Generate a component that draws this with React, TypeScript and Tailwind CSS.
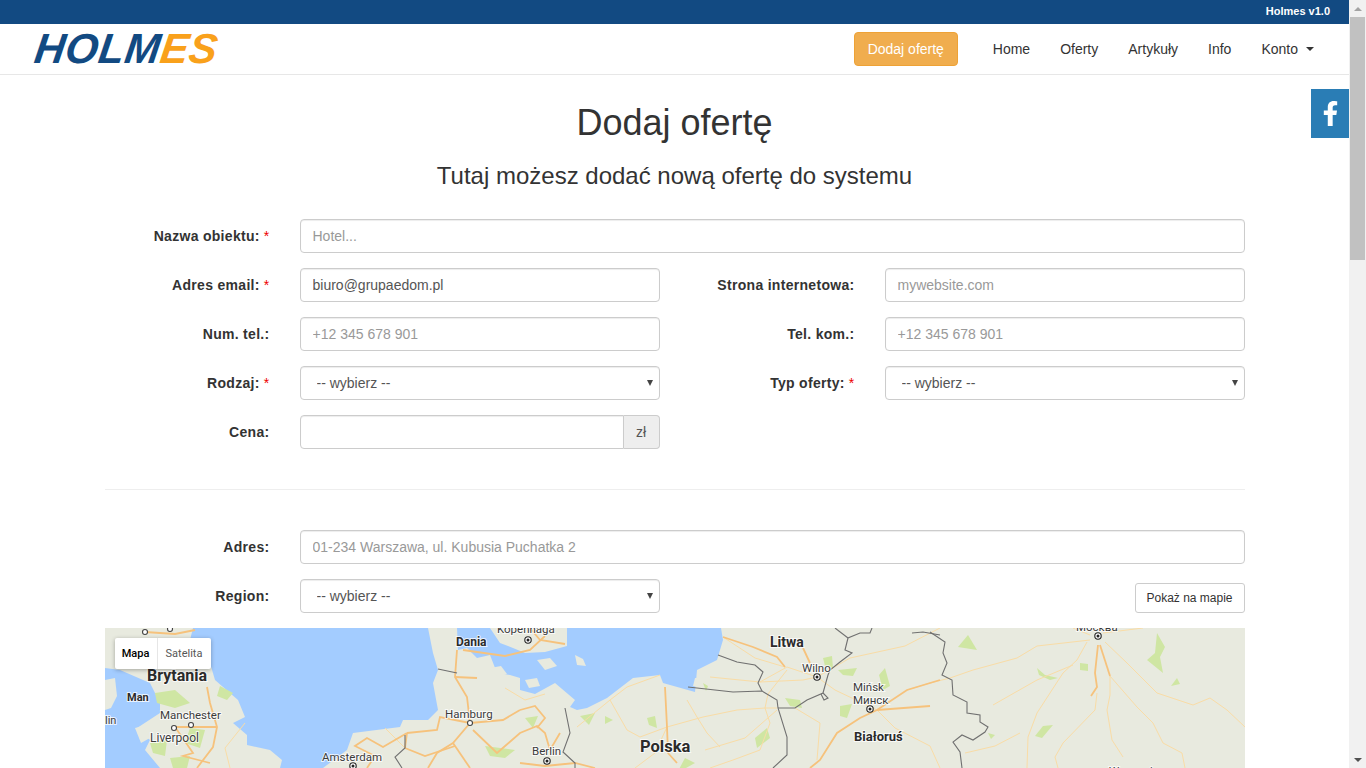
import { FaFacebookF } from "react-icons/fa";

const WATER = "#a3ccff";

const waterShapes = [
  "M88 0 L323 0 L328 25 L333 42 L328 55 L333 82 L323 92 L298 92 L295 99 L248 105 L242 122 L218 140 L175 140 L177 132 L165 122 L142 117 L142 107 L128 95 L140 89 L133 72 L110 52 L105 35 L85 12 Z",
  "M0 40 L15 42 L45 55 L55 75 L55 85 L32 100 L45 112 L40 122 L55 140 L0 140 Z",
  "M352 0 L353 22 L362 20 L372 30 L385 27 L392 45 L405 47 L415 50 L415 62 L430 66 L450 55 L470 72 L465 79 L472 82 L482 80 L502 70 L528 50 L555 47 L558 55 L590 64 L592 42 L612 32 L618 12 L616 0 L462 0 L462 18 L440 24 L420 25 L408 20 L395 15 L385 0 Z",
];

const landOnWater = [
  "M0 52 L10 50 L12 68 L6 80 L0 82 Z",
  "M30 100 L38 98 L45 110 L36 115 Z",
  "M470 27 L478 31 L481 38 L472 37 Z",
  "M385 40 L396 38 L402 46 L392 49 Z",
  "M432 32 L445 30 L452 38 L440 42 Z",
  "M420 52 L432 50 L435 58 L424 60 Z",
  "M590 50 L608 49 L596 60 L588 58 Z",
];

const parks = [
  "M863 7 L872 22 L853 19 Z",
  "M1052 5 L1060 19 L1055 29 L1058 45 L1042 32 L1050 25 Z",
  "M975 35 L983 36 L983 43 L975 42 Z",
  "M932 40 L940 47 L953 50 L945 52 L934 47 Z",
  "M948 97 L937 110 L930 108 L938 98 Z",
  "M1072 50 L1075 56 L1066 58 Z",
  "M883 105 L890 107 L886 111 Z",
  "M50 65 L70 62 L85 75 L70 80 L52 75 Z",
  "M115 58 L128 65 L122 72 L112 68 Z",
  "M85 100 L100 102 L95 120 L80 115 Z",
  "M45 115 L62 112 L60 128 L48 125 Z",
  "M65 130 L85 128 L82 140 L68 140 Z",
  "M380 118 L410 122 L400 130 L385 128 Z",
  "M420 90 L433 88 L428 100 Z",
  "M475 88 L490 85 L484 97 Z",
  "M542 90 L550 88 L552 100 L544 97 Z",
  "M500 88 L508 92 L500 96 Z",
  "M650 110 L662 100 L665 110 L652 120 Z",
  "M718 30 L727 28 L728 40 L720 38 Z",
  "M733 42 L752 40 L748 48 L738 47 Z",
  "M780 40 L785 58 L778 62 L774 47 Z",
  "M680 70 L695 72 L697 80 L685 78 Z",
  "M735 78 L747 76 L742 90 L735 88 Z",
  "M598 55 L603 58 L601 63 Z",
  "M572 145 L580 130 L590 135 Z",
];

const thickRoads = [
  "M993 17 L990 45 L992 59 L986 68",
  "M995 17 L1005 48",
  "M618 9 L648 19 L672 29 L680 39",
  "M698 20 L705 35",
  "M835 52 L802 62 L772 82 L755 90 L732 105 L715 132 L705 140",
  "M772 82 L825 78",
  "M560 59 L562 99 L563 125 L572 135",
  "M352 22 L350 49 L362 69 L365 95 L348 115 L332 125 L323 140",
  "M365 95 L335 89 L332 102 L302 105",
  "M368 102 L392 125 L415 105 L432 98 L440 105 L445 122 L455 105",
  "M365 95 L398 92 L415 82",
  "M348 115 L365 140",
  "M415 82 L430 78 L440 90 L432 100",
  "M102 59 L105 75 L112 99 L108 119 L92 140",
  "M112 99 L70 99 L88 125 L78 128 L105 135",
  "M40 4 L70 6 L90 2",
  "M302 105 L278 119 L262 110 L250 118 L270 128 L262 140",
  "M302 105 L300 120 L320 128 L350 118",
  "M358 22 L400 28 L425 22 L440 8",
  "M350 49 L372 50",
  "M415 135 L440 138 L470 135 L490 140",
  "M425 0 L435 12 L460 16",
];

const thinRoads = [
  "M1005 48 L1005 67 L1002 82 L1007 112 L1018 129",
  "M982 14 L972 32 L958 45 L932 85 L923 109 L922 140",
  "M985 12 L932 18 L912 30 L868 42 L845 50 L825 55 L802 62",
  "M968 37 L932 52 L888 77",
  "M992 65 L990 82 L958 115 L950 129 L953 140",
  "M1005 48 L1032 79 L1048 95 L1058 115 L1077 125 L1080 140",
  "M1000 14 L1022 35 L1052 65 L1088 77 L1105 70 L1122 82 L1140 99",
  "M968 0 L985 7",
  "M998 5 L1038 0",
  "M562 99 L598 89 L632 82 L660 80 L672 80",
  "M582 72 L592 89 L602 105 L615 119",
  "M472 99 L505 72 L522 102 L535 109 L562 99",
  "M505 72 L522 59 L555 47",
  "M605 49 L655 54 L698 52 L712 49",
  "M655 54 L682 39 L712 49",
  "M682 42 L663 66 L660 80 L665 95 L655 122 L628 132 L605 140",
  "M562 99 L550 125 L530 140",
  "M712 49 L745 30 L800 18 L835 0",
  "M712 49 L730 62 L772 82",
  "M772 82 L790 100 L825 118",
  "M690 80 L715 95 L712 132",
  "M672 82 L640 110 L600 122",
  "M618 9 L650 30 L680 39",
  "M860 125 L890 118 L915 105",
  "M825 118 L835 140",
  "M140 95 L120 120 L125 140",
  "M400 60 L420 72 L440 66",
  "M300 120 L280 100",
];

const borders = [
  "M825 4 L840 14 L838 25 L842 35 L837 47 L847 52 L848 67 L862 74 L862 85 L875 87 L875 94 L883 99 L880 104 L868 112 L857 107 L848 114 L855 124 L857 140",
  "M583 59 L628 64 L657 63 L672 72 L673 80 L682 109 L682 127 L668 140",
  "M613 27 L632 34 L650 37 L658 44 L653 55 L657 63",
  "M673 80 L690 80 L702 72 L718 65 L723 47 L725 42 L735 34 L747 25 L740 22 L743 10 L755 5 L765 5 L767 0",
  "M730 0 L743 10",
  "M718 65 L723 70 L719 72 L716 66",
  "M807 5 L818 4 L835 7",
  "M460 80 L465 105 L458 124 L470 135 L470 140",
  "M300 107 L300 120 L290 129 L297 140",
  "M333 41 L352 45",
];

// x and y are relative to the map's top left corner
const labels = [
  { t: "Brytania", x: 42, y: 53, size: 16, bold: true },
  { t: "Man", x: 22, y: 73, size: 11, bold: true },
  { t: "lin", x: 0, y: 96, size: 11, bold: false },
  { t: "Manchester", x: 55, y: 91, size: 11.5, bold: false },
  { t: "Liverpool", x: 45, y: 114, size: 12, bold: false },
  { t: "Amsterdam", x: 217, y: 133, size: 11.5, bold: false },
  { t: "Hamburg", x: 340, y: 90, size: 11.5, bold: false },
  { t: "Dania", x: 351, y: 18, size: 12, bold: true },
  { t: "Kopenhaga", x: 392, y: 5, size: 11.5, bold: false },
  { t: "Berlin", x: 427, y: 127, size: 11.5, bold: false },
  { t: "Polska", x: 535, y: 124, size: 16.5, bold: true },
  { t: "Litwa", x: 665, y: 19, size: 14, bold: true },
  { t: "Wilno", x: 697, y: 44, size: 11.5, bold: false },
  { t: "Mińsk", x: 748, y: 63, size: 11.5, bold: false },
  { t: "Минск", x: 748, y: 76, size: 11.5, bold: false },
  { t: "Białoruś", x: 749, y: 113, size: 13, bold: true },
  { t: "Москва", x: 971, y: 3, size: 11.5, bold: false },
  { t: "Woroneż", x: 1004, y: 147, size: 11.5, bold: false },
];

const smallCities = [
  [40, 4],
  [65, 1],
  [69, 100],
  [86, 97],
  [365, 95],
];

const capitals = [
  [423, 12],
  [712, 49],
  [765, 81],
  [442, 133],
  [248, 138],
  [993, 8],
];

const MapShapes = () => (
  <svg viewBox="0 0 1140 140" className="block h-[140px] w-[1140px]">
    <rect width="1140" height="140" fill="#e8eadf" />
    {waterShapes.map((d, i) => (
      <path key={i} d={d} fill={WATER} />
    ))}
    {landOnWater.map((d, i) => (
      <path key={i} d={d} fill="#e8eadf" />
    ))}
    {parks.map((d, i) => (
      <path key={i} d={d} fill="#cfe6a3" />
    ))}
    {thinRoads.map((d, i) => (
      <path key={i} d={d} fill="none" stroke="#f9dca6" strokeWidth="1" />
    ))}
    {thickRoads.map((d, i) => (
      <path key={i} d={d} fill="none" stroke="#f6c27c" strokeWidth="1.8" />
    ))}
    {borders.map((d, i) => (
      <path key={i} d={d} fill="none" stroke="#707070" strokeWidth="1.1" />
    ))}
    {smallCities.map(([x, y], i) => (
      <circle key={i} cx={x} cy={y} r="2.5" fill="#fff" stroke="#444" strokeWidth="1.1" />
    ))}
    {capitals.map(([x, y], i) => (
      <g key={i}>
        <circle cx={x} cy={y} r="3.2" fill="#fff" stroke="#222" strokeWidth="1.1" />
        <circle cx={x} cy={y} r="1.5" fill="#222" />
      </g>
    ))}
    {labels.map((l) => (
      <text
        key={l.t}
        x={l.x}
        y={l.y}
        fontFamily="Roboto, sans-serif"
        fontSize={l.size}
        fontWeight={l.bold ? 700 : 400}
        fill={l.bold ? "#2b2b2b" : "#3c3c3c"}
        stroke="#ffffff"
        strokeOpacity="0.75"
        strokeWidth="2"
        paintOrder="stroke"
      >
        {l.t}
      </text>
    ))}
  </svg>
);

const inputClass =
  "h-[34px] w-full rounded-[4px] border border-[#ccc] bg-white px-3 text-sm text-[#555] shadow-[inset_0_1px_1px_rgba(0,0,0,0.075)] outline-none placeholder:text-[#999]";

const Label = ({ text, required }: { text: string; required?: boolean }) => (
  <label className="flex h-[34px] items-center justify-end text-sm font-bold tracking-[0.3px] text-[#333]">
    {text}
    {required && <span className="ml-1 font-normal text-[#e00]">*</span>}
  </label>
);

const Select = () => (
  <div className="relative">
    <select className={`${inputClass} appearance-none pl-4`}>
      <option>-- wybierz --</option>
    </select>
    <span className="pointer-events-none absolute top-[14px] right-[7px] h-0 w-0 border-x-[3.5px] border-t-[6px] border-x-transparent border-t-[#444]" />
  </div>
);

const App = () => {
  return (
    <div className="flex h-screen overflow-hidden bg-white font-['Liberation_Sans',Arial,sans-serif] text-sm text-[#333]">
      <div className="relative min-w-0 flex-1">
        <div className="flex h-6 items-center justify-end bg-[#124a82] pr-[19px] text-[11px] font-bold text-white">
          Holmes v1.0
        </div>

        <nav className="flex h-[51px] items-center border-b border-[#e7e7e7] pr-[35px] pl-[35px]">
          <div className="inline-block origin-left skew-x-[-8deg] font-['Liberation_Sans',sans-serif] text-[42px] leading-none font-bold tracking-[0.5px] italic">
            <span className="text-[#124a82]">HOLM</span>
            <span className="text-[#f9a11b]">ES</span>
          </div>
          <a className="ml-auto flex h-[34px] w-[104px] items-center justify-center rounded-[4px] border border-[#eea236] bg-[#f0ad4e] text-white">
            Dodaj ofertę
          </a>
          <ul className="ml-[35px] flex items-center gap-[30px]">
            <li>Home</li>
            <li>Oferty</li>
            <li>Artykuły</li>
            <li>Info</li>
            <li className="flex items-center">
              Konto
              <span className="ml-2 h-0 w-0 border-x-4 border-t-4 border-x-transparent border-t-[#333]" />
            </li>
          </ul>
        </nav>

        <a className="absolute top-[89px] right-0 flex h-[49px] w-[38px] items-center justify-center bg-[#2a7db5] text-[25px] text-white">
          <FaFacebookF />
        </a>

        <main className="mx-auto w-[1140px]">
          <h1 className="mt-[28px] text-center text-[36px] leading-[40px] font-medium">Dodaj ofertę</h1>
          <h3 className="mt-5 text-center text-2xl leading-[26px] font-medium">
            Tutaj możesz dodać nową ofertę do systemu
          </h3>

          <form className="mt-[30px]">
            <div className="grid grid-cols-[165px_360px_165px_360px] gap-x-[30px] gap-y-[15px]">
              <Label text="Nazwa obiektu:" required />
              <input className={`${inputClass} col-span-3`} placeholder="Hotel..." />

              <Label text="Adres email:" required />
              <input className={inputClass} defaultValue="biuro@grupaedom.pl" />
              <Label text="Strona internetowa:" />
              <input className={inputClass} placeholder="mywebsite.com" />

              <Label text="Num. tel.:" />
              <input className={inputClass} placeholder="+12 345 678 901" />
              <Label text="Tel. kom.:" />
              <input className={inputClass} placeholder="+12 345 678 901" />

              <Label text="Rodzaj:" required />
              <Select />
              <Label text="Typ oferty:" required />
              <Select />

              <Label text="Cena:" />
              <div className="flex">
                <input className={`${inputClass} min-w-0 flex-1 rounded-r-none`} />
                <span className="flex h-[34px] w-[36px] items-center justify-center rounded-r-[4px] border border-l-0 border-[#ccc] bg-[#eee] text-[#555]">
                  zł
                </span>
              </div>
            </div>

            <hr className="mt-10 mb-10 border-t border-[#eee]" />

            <div className="grid grid-cols-[165px_360px_165px_360px] gap-x-[30px] gap-y-[15px]">
              <Label text="Adres:" />
              <input className={`${inputClass} col-span-3`} placeholder="01-234 Warszawa, ul. Kubusia Puchatka 2" />

              <Label text="Region:" />
              <Select />
              <div className="col-span-2 flex items-end justify-end">
                <button
                  type="button"
                  className="h-[30px] w-[110px] rounded-[3px] border border-[#ccc] bg-white text-xs text-[#333]"
                >
                  Pokaż na mapie
                </button>
              </div>
            </div>

            <div className="relative mt-[15px] h-[140px] overflow-hidden">
              <MapShapes />
              <div className="absolute top-[10px] left-[10px] flex h-[31px] rounded-[2px] bg-white font-['Roboto',sans-serif] text-[11px] shadow-[0_1px_4px_rgba(0,0,0,0.3)]">
                <span className="flex w-[43px] items-center justify-center border-r border-[#e6e6e6] font-medium text-black">
                  Mapa
                </span>
                <span className="flex w-[53px] items-center justify-center text-[#565656]">Satelita</span>
              </div>
            </div>
          </form>
        </main>
      </div>

      <div className="flex h-full w-[17px] shrink-0 flex-col bg-[#f1f1f1]">
        <div className="flex h-[17px] items-center justify-center">
          <span className="h-0 w-0 border-x-4 border-b-4 border-x-transparent border-b-[#a3a3a3]" />
        </div>
        <div className="mx-auto h-[243px] w-[15px] bg-[#c1c1c1]" />
        <div className="mt-auto flex h-[17px] items-center justify-center">
          <span className="h-0 w-0 border-x-4 border-t-4 border-x-transparent border-t-[#505050]" />
        </div>
      </div>
    </div>
  );
};

export default App;
